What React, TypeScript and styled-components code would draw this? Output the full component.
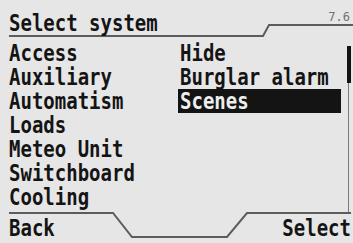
import React from "react";
import styled, { createGlobalStyle } from "styled-components";

const LINE = "#5c5c5c";
const INK = "#141414";

const Global = createGlobalStyle`
  html, body {
    margin: 0;
    padding: 0;
    background: #e6e6e6;
  }
`;

const Screen = styled.div`
  width: 353px;
  height: 243px;
  background: #e6e6e6;
  color: ${INK};
  font-family: "DejaVu Sans Mono", "Liberation Mono", monospace;
  font-weight: bold;
  font-size: 19px;
  overflow: hidden;
  display: flex;
  flex-direction: column;
`;

const Label = styled.span`
  display: inline-block;
  line-height: 24px;
  white-space: pre;
  transform: scaleY(1.2);
  transform-origin: 50% 50%;
`;

const Header = styled.div`
  display: flex;
  align-items: flex-start;
  padding-left: 9px;
`;

const TitleTab = styled.div`
  box-sizing: border-box;
  width: 253px;
  height: 37px;
  padding-top: 11px;
  border-bottom: 2px solid ${LINE};
`;

const Slant = styled.svg`
  flex: none;
  display: block;
`;

const VersionTab = styled.div`
  box-sizing: border-box;
  flex: 1;
  height: 26px;
  padding: 11px 3px 0 0;
  border-bottom: 2px solid ${LINE};
  text-align: right;
  font-size: 12px;
  font-weight: normal;
  line-height: 12px;
  color: #707070;
`;

const Body = styled.div`
  box-sizing: border-box;
  height: 175px;
  display: flex;
  padding: 4px 0 0 9px;
`;

const Column = styled.div<{ $width: number }>`
  width: ${(p) => p.$width}px;
  display: flex;
  flex-direction: column;
`;

const Row = styled.div<{ $selected?: boolean; $indent?: number }>`
  height: 24px;
  padding-left: ${(p) => p.$indent ?? 0}px;
  background: ${(p) => (p.$selected ? INK : "transparent")};
  color: ${(p) => (p.$selected ? "#eeeeee" : INK)};
`;

const ScrollTrack = styled.div`
  width: 4px;
  margin: 5px 0 0 6px;
  background: linear-gradient(
    to right,
    transparent 1.5px,
    #7a7a7a 1.5px,
    #7a7a7a 2.5px,
    transparent 2.5px
  );
`;

const ScrollThumb = styled.div`
  height: 37px;
  background: ${INK};
`;

const Footer = styled.div`
  display: flex;
  align-items: flex-start;
  padding-left: 9px;
  height: 31px;
`;

const SoftKey = styled.div<{ $align: "left" | "right" }>`
  box-sizing: border-box;
  border-top: 2px solid ${LINE};
  padding-top: 2px;
  text-align: ${(p) => p.$align};
`;

const BackKey = styled(SoftKey)`
  width: 104px;
`;

const SelectKey = styled(SoftKey)`
  flex: 1;
  margin-right: 2px;
`;

const Trough = styled.div`
  box-sizing: border-box;
  width: 93px;
  height: 26px;
  border-bottom: 2px solid ${LINE};
`;

const systems = [
  "Access",
  "Auxiliary",
  "Automatism",
  "Loads",
  "Meteo Unit",
  "Switchboard",
  "Cooling",
];

const subsystems = ["Hide", "Burglar alarm", "Scenes"];
const selected = 2;

export default function App() {
  return (
    <>
      <Global />
      <Screen>
        <Header>
          <TitleTab>
            <Label>Select system</Label>
          </TitleTab>
          <Slant width="8" height="37" viewBox="0 0 8 37">
            <path d="M-1 36 L1 36 L7 25 L9 25" fill="none" stroke={LINE} strokeWidth="2" />
          </Slant>
          <VersionTab>7.6</VersionTab>
        </Header>
        <Body>
          <Column $width={169}>
            {systems.map((s) => (
              <Row key={s}>
                <Label>{s}</Label>
              </Row>
            ))}
          </Column>
          <Column $width={163}>
            {subsystems.map((s, i) => (
              <Row key={s} $indent={2} $selected={i === selected}>
                <Label>{s}</Label>
              </Row>
            ))}
          </Column>
          <ScrollTrack>
            <ScrollThumb />
          </ScrollTrack>
        </Body>
        <Footer>
          <BackKey $align="left">
            <Label>Back</Label>
          </BackKey>
          <Slant width="20" height="26" viewBox="0 0 20 26">
            <path d="M-1 1 L0 1 L19 25 L21 25" fill="none" stroke={LINE} strokeWidth="2" />
          </Slant>
          <Trough />
          <Slant width="22" height="26" viewBox="0 0 22 26">
            <path d="M-1 25 L1 25 L21 1 L23 1" fill="none" stroke={LINE} strokeWidth="2" />
          </Slant>
          <SelectKey $align="right">
            <Label>Select</Label>
          </SelectKey>
        </Footer>
      </Screen>
    </>
  );
}
